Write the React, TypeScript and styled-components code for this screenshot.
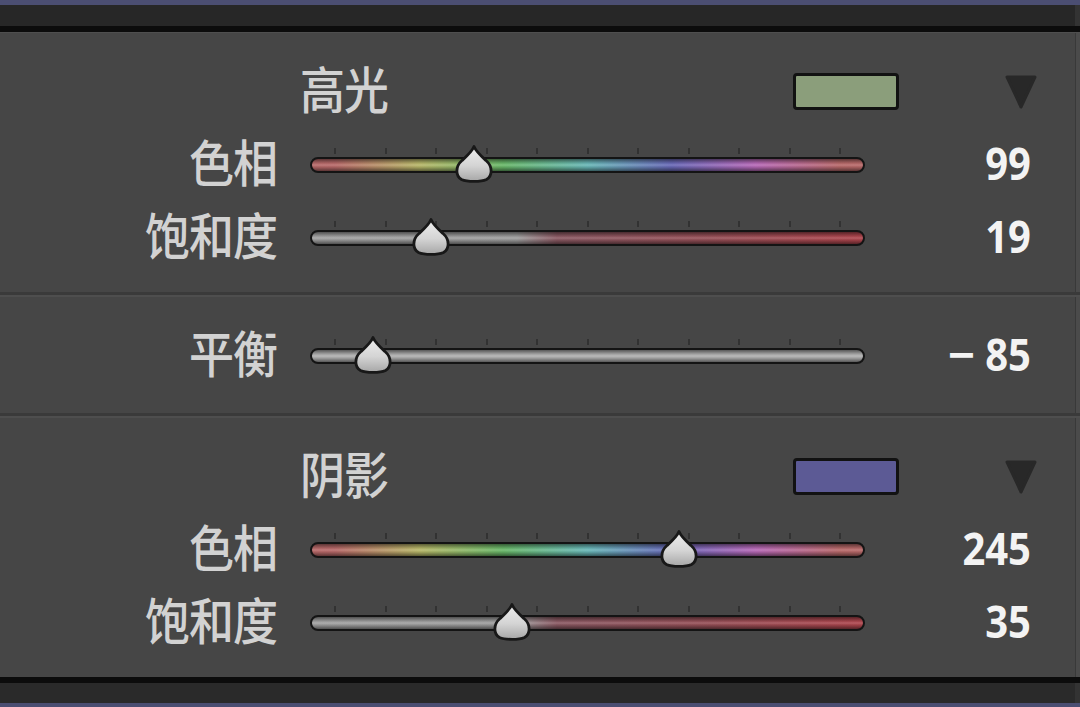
import React, { useId } from "react";
import styled, { createGlobalStyle } from "styled-components";

const GlobalStyle = createGlobalStyle`
  html, body {
    margin: 0;
    padding: 0;
    background: #464646;
    overflow: hidden;
  }
  * { box-sizing: border-box; }
`;

/* slider geometry: the value range sits inset inside the track */
const TRACK_W = 555;
const INSET = 25;
const RANGE_W = 505;
const BORDER = 2;

const hueStops = Array.from({ length: 13 }, (_, i) => {
  const h = i * 30;
  const px = INSET - BORDER + (h / 360) * RANGE_W;
  return `hsl(${h}, 36%, 57%) ${px.toFixed(1)}px`;
}).join(", ");

const tube =
  "linear-gradient(to bottom, rgba(0,0,0,0.5) 0%, rgba(0,0,0,0.08) 35%, rgba(255,255,255,0.12) 50%, rgba(0,0,0,0.08) 65%, rgba(0,0,0,0.5) 100%)";

const fills = {
  hue: `${tube}, linear-gradient(to right, hsl(0,36%,57%) 0px, ${hueStops}, hsl(0,36%,57%) 100%)`,
  sat: `${tube}, linear-gradient(to right, #a2a2a2 0px, #9e9e9e 205px, #8c5a64 245px, #985058 400px, #b0464e 100%)`,
  balance: `${tube}, linear-gradient(to right, #b0b0b0, #b0b0b0)`,
};

type Kind = keyof typeof fills;

const Frame = styled.div`
  width: 1080px;
  height: 707px;
  display: flex;
  flex-direction: column;
  background: #464646;
  font-family: "Noto Sans CJK SC", "Noto Sans", sans-serif;
`;

const WindowStrip = styled.div<{ $h: number }>`
  height: ${(p) => p.$h}px;
  flex: none;
  background: #4b4e72;
`;

const DarkBand = styled.div<{ $edge: "top" | "bottom" }>`
  flex: none;
  height: ${(p) => (p.$edge === "top" ? 27 : 26)}px;
  background: #272727;
  ${(p) =>
    p.$edge === "top"
      ? "border-bottom: 6px solid #0c0c0c;"
      : "border-top: 6px solid #0c0c0c; background: #2a2a2a;"}
  box-shadow: inset -5px 0 0 #333333;
`;

const Panel = styled.div`
  flex: 1;
  display: flex;
  flex-direction: column;
  border-top: 1px solid #4f4f4f;
  background: #464646;
  box-shadow: inset -4px 0 0 #4b4b4b, inset -5px 0 0 #393939;
`;

const Section = styled.div<{ $padBottom?: number }>`
  display: flex;
  flex-direction: column;
  padding: 22px 0 ${(p) => p.$padBottom ?? 18}px;
`;

const Divider = styled.div`
  height: 5px;
  flex: none;
  border-top: 3px solid #3a3a3a;
  background: #4e4e4e;
`;

const HeaderRow = styled.div`
  height: 73px;
  display: flex;
  align-items: center;
  padding: 0 42px 0 300px;
`;

const Title = styled.span`
  flex: 1;
  font-size: 45px;
  font-weight: 500;
  line-height: 1;
  color: #d2d2d2;
  transform: translateY(-4px) scaleY(1.12);
  transform-origin: left center;
  letter-spacing: -1px;
`;

const Swatch = styled.div<{ $color: string }>`
  width: 106px;
  height: 37px;
  margin-right: 105px;
  border: 3px solid #121212;
  border-radius: 4px;
  background: ${(p) => p.$color};
`;

const Disclosure = styled.svg`
  width: 34px;
  height: 36px;
  display: block;
`;

const Row = styled.div`
  height: 73px;
  display: grid;
  grid-template-columns: 277px ${TRACK_W}px 1fr;
  column-gap: 33px;
  align-items: center;
`;

const Label = styled.span`
  text-align: right;
  font-size: 45px;
  font-weight: 500;
  line-height: 1;
  color: #d2d2d2;
  transform: translateY(-4px) scaleY(1.12);
  transform-origin: right center;
  letter-spacing: -1px;
`;

const Value = styled.span`
  text-align: right;
  padding-right: 49px;
  font-family: "Open Sans", "Liberation Sans", sans-serif;
  font-weight: 700;
  font-size: 40px;
  line-height: 1;
  color: #f3f3f3;
  transform: translateY(-2px) scaleY(1.12);
  transform-origin: right center;
  white-space: pre;
`;

/* the negative sign is drawn a little wider than the font's minus */
const Sign = styled.span`
  display: inline-block;
  transform: scaleX(1.18);
  transform-origin: right center;
  margin-right: 10px;
`;

const SliderCell = styled.div`
  display: flex;
  flex-direction: column;
  padding-bottom: 9px;
`;

const TickRow = styled.div`
  display: flex;
  justify-content: space-between;
  padding: 0 ${INSET - 1}px;
  height: 6px;
  margin-bottom: 3px;
`;

const Tick = styled.span`
  width: 2px;
  height: 6px;
  background: #323232;
`;

const TrackWrap = styled.div`
  position: relative;
  height: 16px;
`;

const Track = styled.div<{ $kind: Kind }>`
  height: 16px;
  border: ${BORDER}px solid #141414;
  border-radius: 8px;
  background: ${(p) => fills[p.$kind]};
`;

const ThumbSvg = styled.svg`
  position: absolute;
  top: -12px;
  width: 44px;
  height: 38px;
  overflow: visible;
`;

function Thumb({ left }: { left: number }) {
  const id = useId().replace(/:/g, "");
  return (
    <ThumbSvg viewBox="0 0 44 38" style={{ left: left - 22 }}>
      <defs>
        <linearGradient id={`g${id}`} x1="0" y1="0" x2="0" y2="1">
          <stop offset="0" stopColor="#eeeeee" />
          <stop offset="0.55" stopColor="#d4d4d4" />
          <stop offset="1" stopColor="#a6a6a6" />
        </linearGradient>
      </defs>
      <path
        d="M22 1.5 C24 6.5 28.5 10.5 34 15.5 C41 21.5 40.5 31 34.5 34.5 C29 37 15 37 9.5 34.5 C3.5 31 3 21.5 10 15.5 C15.5 10.5 20 6.5 22 1.5 Z"
        fill={`url(#g${id})`}
        stroke="#181818"
        strokeWidth="2.8"
        strokeLinejoin="round"
      />
    </ThumbSvg>
  );
}

type SliderProps = {
  label: string;
  kind: Kind;
  value: number;
  min: number;
  max: number;
};

function SliderRow({ label, kind, value, min, max }: SliderProps) {
  const frac = (value - min) / (max - min);
  const left = INSET + frac * RANGE_W;
  return (
    <Row>
      <Label>{label}</Label>
      <SliderCell>
        <TickRow>
          {Array.from({ length: 11 }, (_, i) => (
            <Tick key={i} />
          ))}
        </TickRow>
        <TrackWrap>
          <Track $kind={kind} />
          <Thumb left={left} />
        </TrackWrap>
      </SliderCell>
      <Value>
        {value < 0 && <Sign>−</Sign>}
        {Math.abs(value)}
      </Value>
    </Row>
  );
}

function Header({ title, color }: { title: string; color: string }) {
  return (
    <HeaderRow>
      <Title>{title}</Title>
      <Swatch $color={color} />
      <Disclosure viewBox="0 0 34 36">
        <path
          d="M3 3 H31 L17 33 Z"
          fill="#282828"
          stroke="#282828"
          strokeWidth="3"
          strokeLinejoin="round"
        />
      </Disclosure>
    </HeaderRow>
  );
}

export default function App() {
  return (
    <>
      <GlobalStyle />
      <Frame>
        <WindowStrip $h={5} />
        <DarkBand $edge="top" />
        <Panel>
          <Section>
            <Header title="高光" color="#8b9e7b" />
            <SliderRow label="色相" kind="hue" value={99} min={0} max={360} />
            <SliderRow label="饱和度" kind="sat" value={19} min={0} max={100} />
          </Section>
          <Divider />
          <Section $padBottom={21}>
            <SliderRow label="平衡" kind="balance" value={-85} min={-100} max={100} />
          </Section>
          <Divider />
          <Section>
            <Header title="阴影" color="#5c5a95" />
            <SliderRow label="色相" kind="hue" value={245} min={0} max={360} />
            <SliderRow label="饱和度" kind="sat" value={35} min={0} max={100} />
          </Section>
        </Panel>
        <DarkBand $edge="bottom" />
        <WindowStrip $h={4} />
      </Frame>
    </>
  );
}
